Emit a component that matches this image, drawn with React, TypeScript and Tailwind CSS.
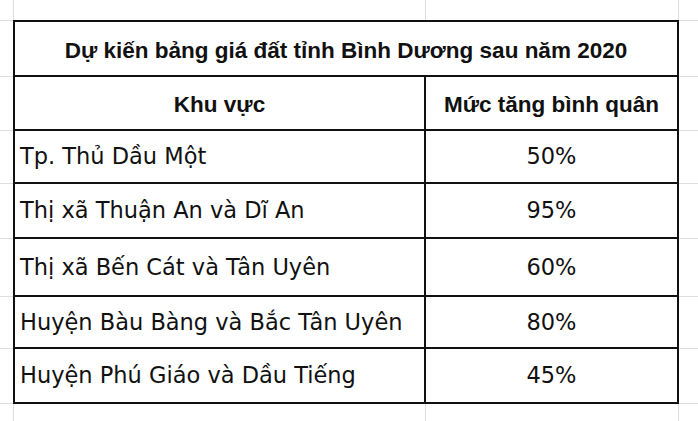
const rows = [
  { area: "Tp. Thủ Dầu Một", rate: "50%", h: "h-[53px]" },
  { area: "Thị xã Thuận An và Dĩ An", rate: "95%", h: "h-[55px]" },
  { area: "Thị xã Bến Cát và Tân Uyên", rate: "60%", h: "h-[58px]" },
  { area: "Huyện Bàu Bàng và Bắc Tân Uyên", rate: "80%", h: "h-[52px]" },
  { area: "Huyện Phú Giáo và Dầu Tiếng", rate: "45%", h: "flex-1" },
];

function Blank() {
  return <div className="bg-white" />;
}

export default function App() {
  return (
    <div className="w-[698px] h-[421px] overflow-hidden bg-[#dedede] grid gap-px grid-cols-[13px_411px_252px_1fr] grid-rows-[20px_55px_53px_52px_54px_57px_51px_54px_1fr]">
      {/* top strip */}
      <Blank />
      <Blank />
      <Blank />
      <Blank />

      {/* left margin cells, rows 2-8 */}
      {Array.from({ length: 7 }).map((_, i) => (
        <div key={"l" + i} className="bg-white col-start-1" style={{ gridRowStart: i + 2 }} />
      ))}

      {/* the table */}
      <div className="col-start-2 col-span-2 row-start-2 row-span-7 -m-px bg-white border-2 border-[#111] flex flex-col text-[#111]">
        <div className="h-[55px] shrink-0 border-b-2 border-[#111] flex items-center justify-center font-['Liberation_Sans',Arial,sans-serif] font-bold text-[22.5px] pt-[5px]">
          Dự kiến bảng giá đất tỉnh Bình Dương sau năm 2020
        </div>
        <div className="h-[54px] shrink-0 border-b-2 border-[#111] flex font-['Liberation_Sans',Arial,sans-serif] font-bold text-[22.5px]">
          <div className="w-[411px] border-r-2 border-[#111] flex items-center justify-center pt-[3px]">Khu vực</div>
          <div className="flex-1 flex items-center justify-center pt-[3px]">Mức tăng bình quân</div>
        </div>
        {rows.map((r, i) => (
          <div
            key={r.area}
            className={`${r.h} shrink-0 flex font-['DejaVu_Sans',Verdana,sans-serif] text-[22.5px] ${i < rows.length - 1 ? "border-b-2 border-[#111]" : ""}`}
          >
            <div className="w-[411px] border-r-2 border-[#111] flex items-center pl-[5px] pt-[1px]">{r.area}</div>
            <div className="flex-1 flex items-center justify-center pt-[1px]">{r.rate}</div>
          </div>
        ))}
      </div>

      {/* right margin cells, rows 2-8 */}
      {Array.from({ length: 7 }).map((_, i) => (
        <div key={"r" + i} className="bg-white col-start-4" style={{ gridRowStart: i + 2 }} />
      ))}

      {/* bottom strip */}
      <div className="bg-white row-start-9 col-start-1" />
      <div className="bg-white row-start-9 col-start-2" />
      <div className="bg-white row-start-9 col-start-3" />
      <div className="bg-white row-start-9 col-start-4" />
    </div>
  );
}
